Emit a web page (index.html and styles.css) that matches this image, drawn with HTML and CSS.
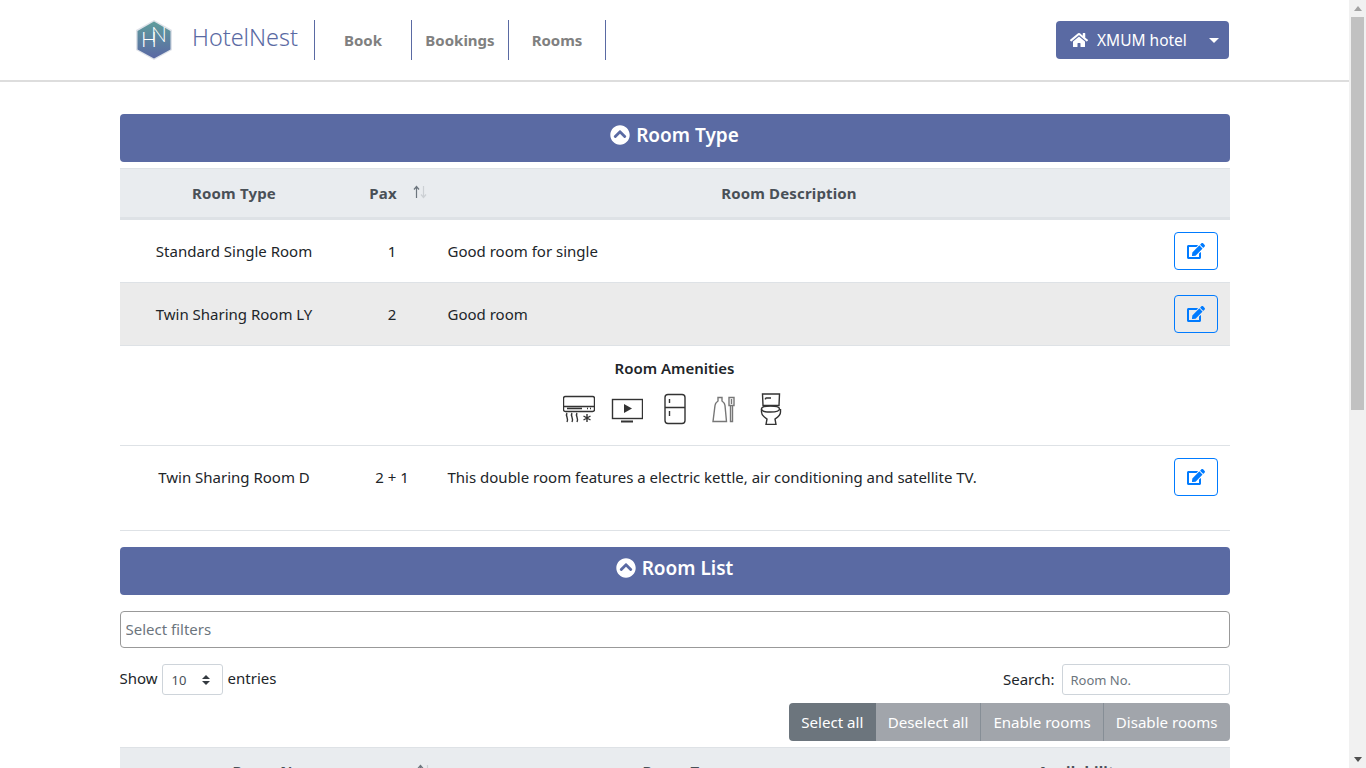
FILE: index.html
```html
<!DOCTYPE html>
<html lang="en">
<head>
  <meta charset="utf-8" />
  <meta name="viewport" content="width=device-width, initial-scale=1" />
  <title>HotelNest - Rooms</title>
  <link rel="stylesheet" href="styles.css">
</head>
<body>
  <svg class="sprite" xmlns="http://www.w3.org/2000/svg">
    <symbol id="i-up" viewBox="0 0 512 512"><path d="M8 256C8 119 119 8 256 8s248 111 248 248-111 248-248 248S8 393 8 256zm231-113.9L103.5 277.6c-9.4 9.4-9.4 24.6 0 33.9l17 17c9.4 9.4 24.6 9.4 33.9 0L256 226.9l101.6 101.6c9.4 9.4 24.6 9.4 33.9 0l17-17c9.4-9.4 9.4-24.6 0-33.9L273 142.1c-9.4-9.4-24.6-9.4-34 0z"/></symbol>
    <symbol id="i-edit" viewBox="0 0 576 512"><path d="M402.6 83.2l90.2 90.2c3.8 3.8 3.8 10 0 13.8L274.4 405.6l-92.8 10.3c-12.4 1.4-22.9-9.1-21.5-21.5l10.3-92.8L388.8 83.2c3.8-3.8 10-3.8 13.8 0zm162-22.9l-48.8-48.8c-15.2-15.2-39.9-15.2-55.2 0l-35.4 35.4c-3.8 3.8-3.8 10 0 13.8l90.2 90.2c3.8 3.8 10 3.8 13.8 0l35.4-35.4c15.2-15.3 15.2-40 0-55.2zM384 346.2V448H64V128h229.8c3.2 0 6.2-1.3 8.5-3.5l40-40c7.6-7.6 2.2-20.5-8.5-20.5H48C21.5 64 0 85.5 0 112v352c0 26.5 21.5 48 48 48h352c26.5 0 48-21.5 48-48V306.2c0-10.7-12.9-16-20.5-8.5l-40 40c-2.2 2.3-3.5 5.3-3.5 8.5z"/></symbol>
    <symbol id="i-sort" viewBox="0 0 16 16">
      <path class="sort-up" d="M4.5 14V3M2 5.5l2.5-3 2.5 3"/>
      <path class="sort-down" d="M11.500 2v11M9 10.500l2.500 3 2.500-3"/>
    </symbol>
  </svg>

  <nav class="navbar">
    <a href="#" class="brand">
      <svg class="brand-logo" viewBox="0 0 42 42" xmlns="http://www.w3.org/2000/svg">
        <defs>
          <linearGradient id="logo-grad" x1="0" y1="0" x2="0" y2="1">
            <stop offset="0" stop-color="#5f9d9c"/>
            <stop offset="1" stop-color="#5a68a4"/>
          </linearGradient>
        </defs>
        <path d="M21 1l18 10v20L21 41 3 31V11z" fill="#dfe3ea"/>
        <path d="M21 2.500l16.500 9.500v18.500L21 39.500 4.500 30.500V12z" fill="url(#logo-grad)"/>
        <text class="logo-letter" x="8" y="28">H</text>
        <text class="logo-letter" x="18" y="23">N</text>
      </svg>
      <span class="brand-name">HotelNest</span>
    </a>
    <ul class="nav-links">
      <li><a href="#">Book</a></li>
      <li><a href="#">Bookings</a></li>
      <li><a href="#">Rooms</a></li>
    </ul>
    <button class="hotel-btn">
      <svg class="home-icon" viewBox="0 0 576 512" xmlns="http://www.w3.org/2000/svg"><path d="M280.37 148.26L96 300.11V464a16 16 0 0 0 16 16l112.06-.29a16 16 0 0 0 15.92-16V368a16 16 0 0 1 16-16h64a16 16 0 0 1 16 16v95.64a16 16 0 0 0 16 16.05L464 480a16 16 0 0 0 16-16V300L295.67 148.26a12.19 12.19 0 0 0-15.3 0zM571.6 251.47L488 182.56V44.05a12 12 0 0 0-12-12h-56a12 12 0 0 0-12 12v72.61L318.47 43a48 48 0 0 0-61 0L4.34 251.47a12 12 0 0 0-1.6 16.9l25.5 31A12 12 0 0 0 45.15 301l235.22-193.74a12.19 12.19 0 0 1 15.3 0L530.9 301a12 12 0 0 0 16.9-1.6l25.5-31a12 12 0 0 0-1.7-16.93z"/></svg>
      <span class="hotel-name">XMUM hotel</span>
      <span class="caret"></span>
    </button>
  </nav>

  <main class="container">
    <button class="panel-head">
      <svg class="panel-icon"><use href="#i-up"/></svg>
      Room Type
    </button>

    <table class="table types-table">
      <thead>
        <tr>
          <th class="col-type">Room Type</th>
          <th class="col-pax sortable">Pax <svg class="sort-icon"><use href="#i-sort"/></svg></th>
          <th class="col-desc">Room Description</th>
          <th class="col-action"></th>
        </tr>
      </thead>
      <tbody>
        <tr>
          <td class="center">Standard Single Room</td>
          <td class="center">1</td>
          <td>Good room for single</td>
          <td class="right"><button class="edit-btn"><svg><use href="#i-edit"/></svg></button></td>
        </tr>
        <tr class="open">
          <td class="center">Twin Sharing Room LY</td>
          <td class="center">2</td>
          <td>Good room</td>
          <td class="right"><button class="edit-btn"><svg><use href="#i-edit"/></svg></button></td>
        </tr>
        <tr class="details">
          <td colspan="4">
            <div class="amenities-title">Room Amenities</div>
            <div class="amenities">
              <svg viewBox="0 0 32 32" xmlns="http://www.w3.org/2000/svg">
                <rect x="0.500" y="3.500" width="31" height="15" rx="2"/>
                <path d="M1 13.500h30M4 15.500h15M24 15.500h1M27 15.500h1"/>
                <path d="M4 20c-2 3 2 5 0 9M9 20c-2 3 2 5 0 9M14 20c-2 3 2 5 0 9"/>
                <path d="M24 21v8M20.500 23l7 4M27.500 23l-7 4"/>
              </svg>
              <svg viewBox="0 0 32 32" xmlns="http://www.w3.org/2000/svg">
                <rect x="1.500" y="6.500" width="30" height="19"/>
                <path class="solid" d="M13 11v9l8-4.500z"/>
                <path d="M10 28.500h12" stroke-width="2"/>
              </svg>
              <svg viewBox="0 0 32 32" xmlns="http://www.w3.org/2000/svg">
                <rect x="6" y="1.500" width="20" height="29" rx="3"/>
                <path d="M6 14.500h20M10.500 6v4M10.500 18v5"/>
              </svg>
              <svg class="faint" viewBox="0 0 32 32" xmlns="http://www.w3.org/2000/svg">
                <path d="M6 28.500l2-16c.3-2 1.500-3.500 3-4.500V4.500h4V8c1.500 1 2.700 2.500 3 4.500l1.500 16z"/>
                <path d="M22 4.500h5v8h-5zM23.500 12.500v16h2v-16M24.500 6v5"/>
              </svg>
              <svg viewBox="0 0 32 32" xmlns="http://www.w3.org/2000/svg">
                <path d="M7.500 1h17l-.5 11.500H8zM10.500 5H16M10.500 5v1.500"/>
                <path d="M6.500 16c0-2 3-3 9-3s9 1 9 3-3 3-9 3-9-1-9-3z"/>
                <path d="M6.500 16v3c0 4 4 6 5.500 7l-1 5.500h10l-1-5.500c1.500-1 5.500-3 5.500-7v-3"/>
              </svg>
            </div>
          </td>
        </tr>
        <tr class="last">
          <td class="center">Twin Sharing Room D</td>
          <td class="center">2 + 1</td>
          <td>This double room features a electric kettle, air conditioning and satellite TV.</td>
          <td class="right"><button class="edit-btn"><svg><use href="#i-edit"/></svg></button></td>
        </tr>
      </tbody>
    </table>

    <button class="panel-head">
      <svg class="panel-icon"><use href="#i-up"/></svg>
      Room List
    </button>

    <input class="filters" type="text" placeholder="Select filters" />

    <div class="table-tools">
      <label class="length">
        <span class="tool-text">Show</span>
        <select class="length-select"><option>10</option><option>25</option><option>50</option></select>
        <span class="tool-text">entries</span>
      </label>
      <label class="search">
        <span class="tool-text">Search:</span>
        <input class="search-input" type="text" placeholder="Room No." />
      </label>
    </div>

    <div class="btn-row">
      <div class="btn-group">
        <button class="btn active">Select all</button>
        <button class="btn">Deselect all</button>
        <button class="btn">Enable rooms</button>
        <button class="btn">Disable rooms</button>
      </div>
    </div>

    <table class="table rooms-table">
      <thead>
        <tr>
          <th class="col-no sortable">Room No. <svg class="sort-icon"><use href="#i-sort"/></svg></th>
          <th class="col-roomtype">Room Type</th>
          <th class="col-avail">Availability</th>
        </tr>
      </thead>
    </table>
  </main>

  <div class="scrollbar">
    <span class="arrow arrow-up"></span>
    <div class="thumb"></div>
    <span class="arrow arrow-down"></span>
  </div>
</body>
</html>
```

FILE: styles.css
```css
body {
  font-family: 'Noto Sans', 'Open Sans', Arial, sans-serif;
  font-size: 15px;
  color: #212529;
  background-color: #fff;
  margin: 0 17px 0 0;
  min-height: 1434px;
}

.sprite {
  display: none;
}

button {
  font-family: inherit;
  cursor: pointer;
}

/* window scrollbar */
.scrollbar {
  position: fixed;
  top: 0;
  right: 0;
  bottom: 0;
  width: 17px;
  display: flex;
  flex-direction: column;
  align-items: center;
  background-color: #f1f1f1;
}

.thumb {
  width: 13px;
  height: 393px;
  margin-top: 6px;
  background-color: #c1c1c1;
}

.arrow {
  border-left: 4px solid transparent;
  border-right: 4px solid transparent;
}

.arrow-up {
  margin-top: 6px;
  border-bottom: 5px solid #a3a3a3;
}

.arrow-down {
  margin-top: auto;
  margin-bottom: 6px;
  border-top: 5px solid #505050;
}

/* header */
.navbar {
  display: flex;
  align-items: center;
  height: 80px;
  padding: 0 120px;
  border-bottom: 2px solid #ddd;
}

.brand {
  display: flex;
  align-items: center;
  width: 194px;
  height: 40px;
  padding-left: 13px;
  box-sizing: border-box;
  text-decoration: none;
}

.brand-logo {
  width: 42px;
  height: 42px;
  flex: none;
}

.logo-letter {
  font-family: 'Lato', sans-serif;
  font-weight: 300;
  font-size: 21px;
  fill: #fff;
}

.brand-name {
  margin-left: 17px;
  padding-bottom: 6px;
  font-size: 23.400px;
  font-weight: 300;
  color: #5a6aa3;
}

.nav-links {
  display: flex;
  list-style: none;
  margin: 0;
  padding: 0;
  border-left: 1px solid #5a6aa3;
  flex: 1;
}

.nav-links li {
  width: 96px;
  border-right: 1px solid #5a6aa3;
  height: 40px;
  display: flex;
  align-items: center;
  justify-content: center;
}

.nav-links a {
  color: #808080;
  font-weight: 700;
  font-size: 15px;
  text-decoration: none;
}

.hotel-btn {
  display: flex;
  align-items: center;
  width: 173px;
  height: 38px;
  padding: 0 10px 0 14px;
  border: none;
  border-radius: 4px;
  background-color: #5a6aa3;
  color: #fff;
  font-size: 15.500px;
}

.home-icon {
  width: 18px;
  height: 16px;
  fill: #fff;
}

.hotel-name {
  margin-left: 9px;
}

.caret {
  margin-left: auto;
  border-top: 5px solid #fff;
  border-left: 5px solid transparent;
  border-right: 5px solid transparent;
}

/* page */
.container {
  width: 1110px;
  margin: 0 auto;
  padding-top: 32px;
}

.panel-head {
  display: flex;
  align-items: center;
  justify-content: center;
  width: 100%;
  height: 48px;
  padding: 0 0 7px;
  border: none;
  border-radius: 4px;
  background-color: #5a6aa3;
  color: #fff;
  font-size: 19px;
  font-weight: 600;
}

.panel-icon {
  width: 20px;
  height: 20px;
  fill: #fff;
  margin-right: 6px;
}

/* tables */
.table {
  width: 100%;
  border-collapse: collapse;
  table-layout: fixed;
}

.table th {
  height: 50px;
  padding: 0 12px;
  background-color: #e9ecef;
  color: #495057;
  font-weight: 700;
  font-size: 15px;
  letter-spacing: .15px;
  text-align: center;
  border-top: 1px solid #dee2e6;
  border-bottom: 3px solid #dee2e6;
  box-sizing: border-box;
}

.table th.sortable {
  padding-right: 30px;
  position: relative;
}

.sort-icon {
  position: absolute;
  right: 8px;
  top: 15px;
  width: 16px;
  height: 16px;
}

.sort-up,
.sort-down {
  fill: none;
  stroke-width: 1.200;
}

.sort-up {
  stroke: #6c757d;
}

.sort-down {
  stroke: #ccd0d4;
}

.table td {
  height: 62px;
  padding: 0 12px;
  border-bottom: 1px solid #dee2e6;
}

.types-table {
  margin-top: 6px;
}

.col-type {
  width: 229px;
}

.col-pax {
  width: 87px;
}

.col-action {
  width: 87px;
}

.center {
  text-align: center;
}

.right {
  text-align: right;
}

.open td {
  background-color: #ebebeb;
}

.table .details td {
  height: 100px;
  text-align: center;
  vertical-align: top;
  padding-top: 12px;
  box-sizing: border-box;
}

.amenities-title {
  font-weight: 600;
}

.amenities {
  display: flex;
  justify-content: center;
  gap: 16px;
  margin-top: 15px;
}

.amenities svg {
  width: 32px;
  height: 32px;
  fill: none;
  stroke: #333;
  stroke-width: 1.400;
}

.amenities svg.faint {
  stroke: #777;
}

.amenities .solid {
  fill: #333;
  stroke: none;
}

.table .last td {
  height: 85px;
  padding-bottom: 23px;
  box-sizing: border-box;
}

.edit-btn {
  width: 44px;
  height: 38px;
  padding: 0;
  vertical-align: middle;
  background: transparent;
  border: 1px solid #007bff;
  border-radius: 4px;
}

.edit-btn svg {
  display: block;
  width: 18px;
  height: 16px;
  margin: 0 auto;
  fill: #007bff;
}

/* room list */
.types-table + .panel-head {
  margin-top: 16px;
}

.filters {
  display: block;
  width: 100%;
  height: 37px;
  margin-top: 16px;
  padding: 0 5px 2px;
  box-sizing: border-box;
  border: 1px solid #999;
  border-radius: 4px;
  font-family: inherit;
  font-size: 15px;
}

.filters::placeholder,
.search-input::placeholder {
  color: #6c757d;
  opacity: 1;
}

.table-tools {
  display: flex;
  justify-content: space-between;
  margin-top: 16px;
}

.length,
.search {
  display: flex;
  align-items: center;
  gap: 4px;
}

.tool-text {
  padding-bottom: 3px;
}

.search .tool-text {
  padding-bottom: 1px;
}

.length-select {
  width: 61px;
  height: 31px;
  margin-right: 1px;
  padding: 0 9px;
  font-family: inherit;
  font-size: 13px;
  color: #495057;
  background: #fff url("data:image/svg+xml,%3csvg xmlns='http://www.w3.org/2000/svg' width='8' height='10'%3e%3cpath fill='%23343a40' d='M4 0L0 4h8zM4 10L0 6h8z'/%3e%3c/svg%3e") no-repeat right 12px center;
  border: 1px solid #ced4da;
  border-radius: 3px;
  appearance: none;
}

.search-input {
  width: 168px;
  height: 31px;
  margin-left: 3px;
  padding: 0 8px;
  box-sizing: border-box;
  font-family: inherit;
  font-size: 13px;
  border: 1px solid #ced4da;
  border-radius: 3px;
}

.btn-row {
  display: flex;
  justify-content: flex-end;
  margin-top: 8px;
}

.btn-group {
  display: flex;
  border-radius: 4px;
  overflow: hidden;
}

.btn {
  height: 38px;
  padding: 0 12px;
  border: none;
  border-left: 1px solid #868e96;
  background-color: #a1a5ab;
  color: #fff;
  font-size: 15.100px;
}

.btn.active {
  padding: 0 12.500px;
  background-color: #6c757d;
  border-left: none;
}

.btn.active + .btn {
  border-left: none;
}

.rooms-table {
  margin-top: 6px;
}

.rooms-table th {
  padding-bottom: 3px;
}

.rooms-table .sort-icon {
  right: 6px;
}

.col-no {
  width: 318px;
}

.col-avail {
  width: 298px;
}
```
